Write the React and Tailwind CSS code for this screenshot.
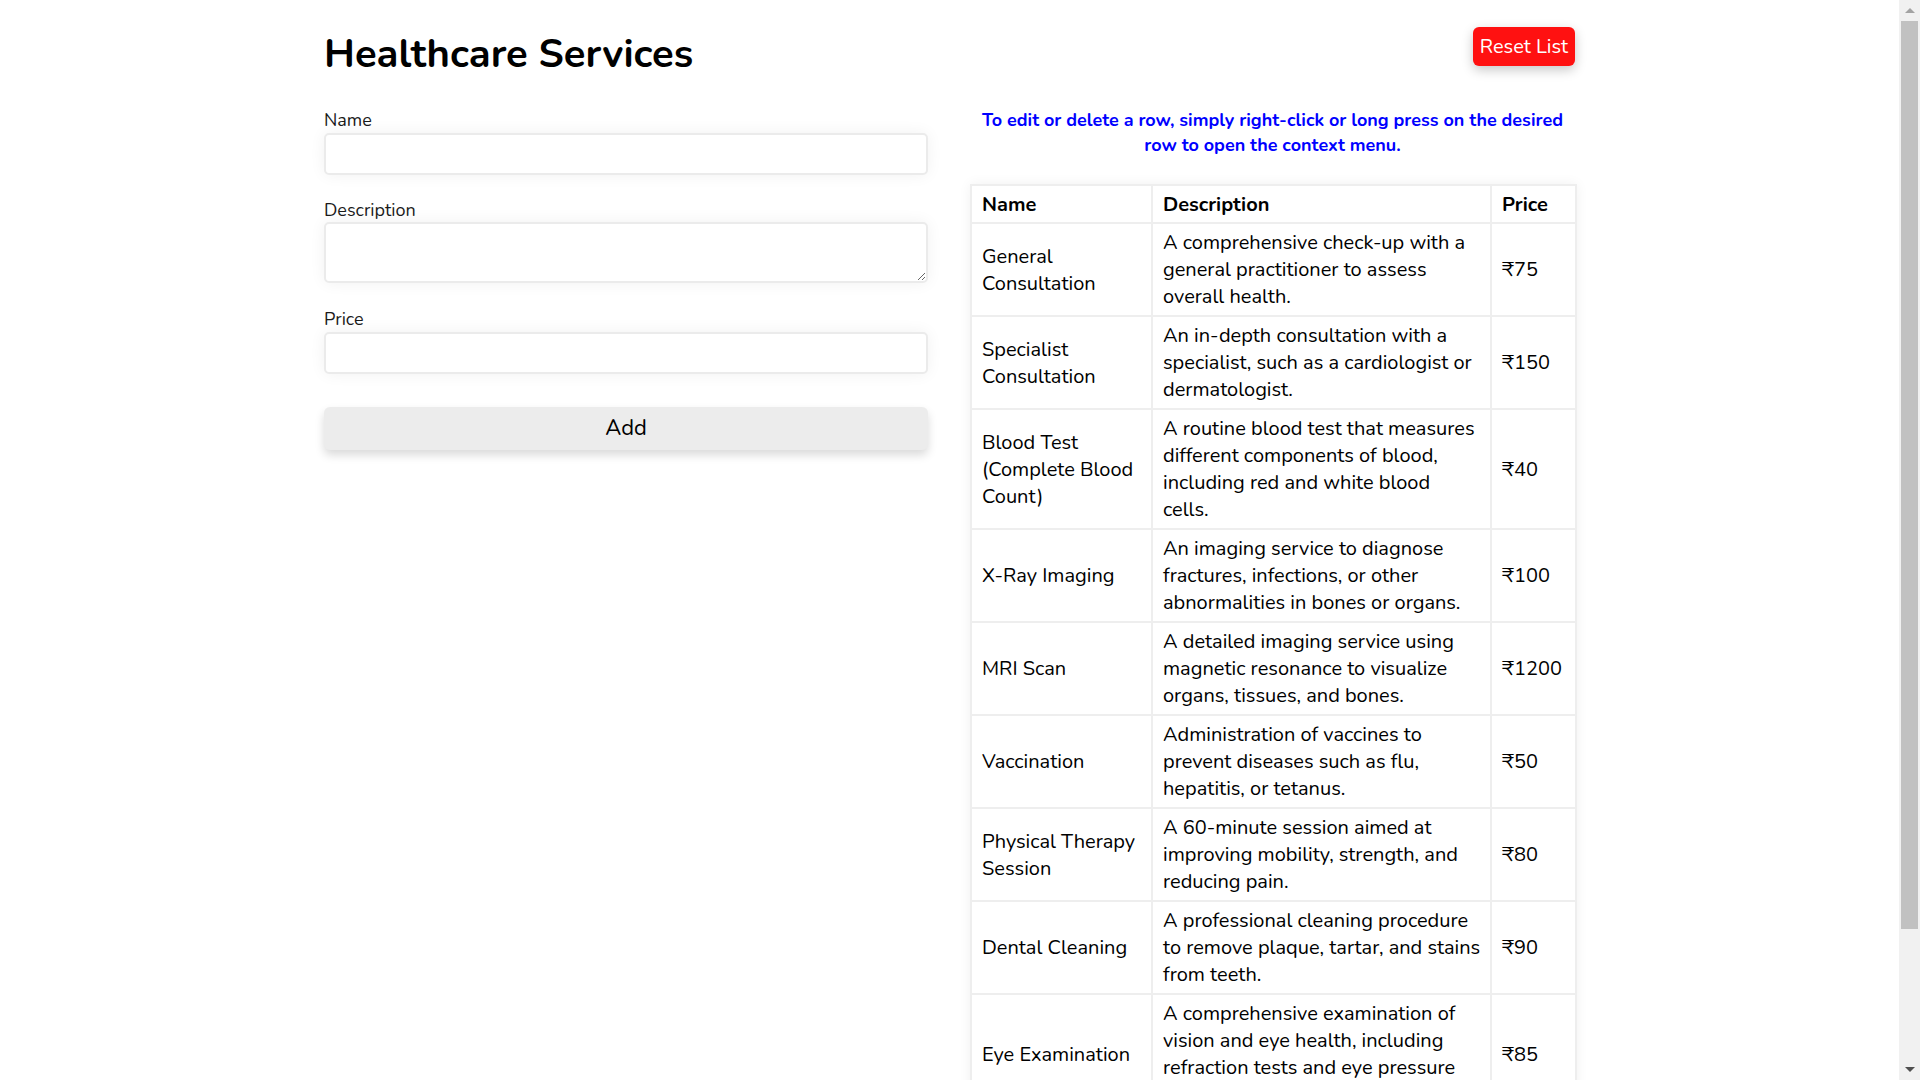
import React, { useState } from 'react';

const services = [
  { name: 'General Consultation', description: 'A comprehensive check-up with a general practitioner to assess overall health.', price: 75 },
  { name: 'Specialist Consultation', description: 'An in-depth consultation with a specialist, such as a cardiologist or dermatologist.', price: 150 },
  { name: 'Blood Test (Complete Blood Count)', description: 'A routine blood test that measures different components of blood, including red and white blood cells.', price: 40 },
  { name: 'X-Ray Imaging', description: 'An imaging service to diagnose fractures, infections, or other abnormalities in bones or organs.', price: 100 },
  { name: 'MRI Scan', description: 'A detailed imaging service using magnetic resonance to visualize organs, tissues, and bones.', price: 1200 },
  { name: 'Vaccination', description: 'Administration of vaccines to prevent diseases such as flu, hepatitis, or tetanus.', price: 50 },
  { name: 'Physical Therapy Session', description: 'A 60-minute session aimed at improving mobility, strength, and reducing pain.', price: 80 },
  { name: 'Dental Cleaning', description: 'A professional cleaning procedure to remove plaque, tartar, and stains from teeth.', price: 90 },
  { name: 'Eye Examination', description: 'A comprehensive examination of vision and eye health, including refraction tests and eye pressure measurement.', price: 85 },
];

const fieldClass =
  'w-full h-[42px] px-3 border-2 border-[#ebebeb] rounded-[5px] bg-white shadow-[0_0_16px_rgba(0,0,0,0.06)] outline-none text-[18px]';

const cell = 'border-2 border-[#eeeeee] pl-[10px] pr-[9.5px] align-middle';

export default function App() {
  const [rows, setRows] = useState(services);
  const [form, setForm] = useState({ name: '', description: '', price: '' });

  const addRow = () => {
    if (!form.name || !form.price) return;
    setRows([...rows, { ...form, price: Number(form.price) }]);
    setForm({ name: '', description: '', price: '' });
  };

  return (
    <div className="flex items-start bg-white text-black font-['Nunito','Lato','Noto_Sans',sans-serif]">
      <main className="flex-1">
        <div className="w-[1251px] mx-auto pt-[27px] pb-[126px]">
          {/* header */}
          <div className="flex justify-between items-start">
            <h1 className="mt-[3px] text-[40px] leading-[48px] font-bold">Healthcare Services</h1>
            <button
              onClick={() => setRows(services)}
              className="h-[39px] px-[7px] bg-[#ff1111] text-white text-[20px] leading-[27px] rounded-[6px] shadow-[0_4px_12px_rgba(0,0,0,0.22)]"
            >
              Reset List
            </button>
          </div>

          <div className="grid grid-cols-[604px_605px] gap-[42px] mt-[30px]">
            {/* form column */}
            <div>
              <label className="block text-[18px] leading-[24.5px] text-[#1a1a1a]">Name</label>
              <input
                className={fieldClass}
                value={form.name}
                onChange={(e) => setForm({ ...form, name: e.target.value })}
              />

              <label className="block mt-[23px] text-[18px] leading-[24.5px] text-[#1a1a1a]">Description</label>
              <textarea
                className={`${fieldClass} h-[61px] py-2 block`}
                value={form.description}
                onChange={(e) => setForm({ ...form, description: e.target.value })}
              />

              <label className="block mt-[24px] text-[18px] leading-[24.5px] text-[#1a1a1a]">Price</label>
              <input
                type="number"
                className={fieldClass}
                value={form.price}
                onChange={(e) => setForm({ ...form, price: e.target.value })}
              />

              <button
                onClick={addRow}
                className="w-full h-[43px] mt-[33px] bg-[#ececec] rounded-[6px] text-[22px] leading-[30px] shadow-[0_5px_10px_rgba(0,0,0,0.15)]"
              >
                Add
              </button>
            </div>

            {/* table column */}
            <div>
              <p className="text-center text-[#0000ff] font-bold text-[18px] leading-[24.5px]">
                To edit or delete a row, simply right-click or long press on the desired row to open the context menu.
              </p>

              <table className="mt-[27px] w-full table-fixed border-collapse text-[20px] leading-[27px] shadow-[0_0_12px_rgba(0,0,0,0.06)]">
                <colgroup>
                  <col className="w-[181px]" />
                  <col className="w-[339px]" />
                  <col className="w-[85px]" />
                </colgroup>
                <thead>
                  <tr>
                    <th className={`${cell} py-[4.5px] text-left font-bold`}>Name</th>
                    <th className={`${cell} py-[4.5px] text-left font-bold`}>Description</th>
                    <th className={`${cell} py-[4.5px] text-left font-bold`}>Price</th>
                  </tr>
                </thead>
                <tbody>
                  {rows.map((row, i) => (
                    <tr key={i}>
                      <td className={`${cell} py-[5px]`}>{row.name}</td>
                      <td className={`${cell} py-[5px]`}>{row.description}</td>
                      <td className={`${cell} py-[5px]`}>₹{row.price}</td>
                    </tr>
                  ))}
                </tbody>
              </table>
            </div>
          </div>
        </div>
      </main>

      {/* window scrollbar */}
      <aside className="sticky top-0 w-[21px] h-screen shrink-0 bg-[#f1f1f1] flex flex-col items-center">
        <svg width="12" height="21" viewBox="0 0 12 21" className="shrink-0">
          <path d="M1 13 L6 8 L11 13 Z" fill="#a3a3a3" />
        </svg>
        <div className="w-[17px] h-[908px] bg-[#c1c1c1]" />
        <div className="flex-1" />
        <svg width="12" height="21" viewBox="0 0 12 21" className="shrink-0">
          <path d="M1 8 L6 13 L11 8 Z" fill="#505050" />
        </svg>
      </aside>
    </div>
  );
}
